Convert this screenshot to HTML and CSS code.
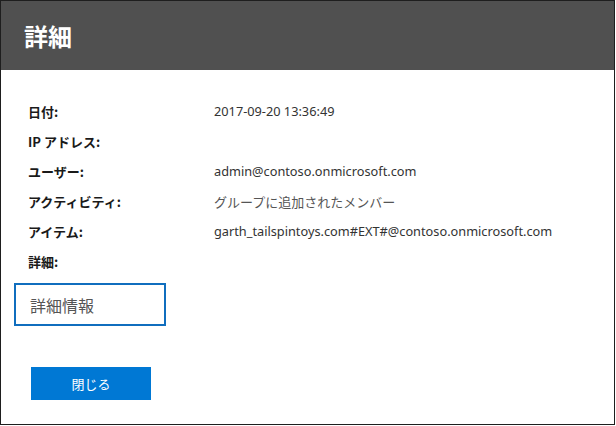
FILE: index.html
```html
<!DOCTYPE html>
<html lang="ja">
<head>
<meta charset="utf-8">
<link rel="stylesheet" href="styles.css">
</head>
<body>
<div class="dialog">
  <header class="head"><h1 class="title">詳細</h1></header>
  <div class="body">
    <dl class="grid">
      <dt>日付:</dt><dd>2017-09-20 13:36:49</dd>
      <dt>IP アドレス:</dt><dd></dd>
      <dt>ユーザー:</dt><dd>admin@contoso.onmicrosoft.com</dd>
      <dt>アクティビティ:</dt><dd class="soft">グループに追加されたメンバー</dd>
      <dt>アイテム:</dt><dd>garth_tailspintoys.com#EXT#@contoso.onmicrosoft.com</dd>
      <dt>詳細:</dt><dd></dd>
    </dl>
    <div class="more">詳細情報</div>
    <button class="close">閉じる</button>
  </div>
</div>
</body>
</html>
```
FILE: styles.css
```css
html, body { margin: 0; padding: 0; background: #fff; }
body { font-family: "Noto Sans", "Noto Sans CJK JP", sans-serif; }
.dialog {
  width: 615px; height: 425px; box-sizing: border-box;
  border: 1px solid #1e1e1e; background: #fff;
  display: flex; flex-direction: column;
}
.head { height: 69px; background: #505050; display: flex; align-items: center; padding-left: 23px; }
.title { margin: 0; color: #fff; font-size: 24px; font-weight: 700; font-family: "Noto Sans CJK JP", sans-serif; line-height: 1; }
.body { padding: 26px 0 0 13px; display: flex; flex-direction: column; align-items: flex-start; }
.grid { margin: 0 0 0 14px; display: grid; grid-template-columns: 186px auto; grid-auto-rows: 30px; align-items: center; }
.grid dt { font-weight: 700; font-size: 13px; color: #1a1a1a; font-family: "Noto Sans CJK JP", sans-serif; }
.grid dd { margin: 0; font-size: 12.75px; color: #333; }
.grid dd.soft { color: #555; font-size: 13px; font-family: "Noto Sans CJK JP", sans-serif; }
.more {
  margin-top: 7px; width: 152px; height: 43px; box-sizing: border-box;
  border: 2px solid #106ebe; color: #555; font-size: 16px;
  font-family: "Noto Sans CJK JP", sans-serif;
  display: flex; align-items: center; padding-left: 14px;
}
.close {
  margin: 41px 0 0 17px; width: 120px; height: 33px; border: 0;
  background: #0078d4; color: #fff; font-size: 13px;
  font-family: "Noto Sans CJK JP", sans-serif;
}
```
